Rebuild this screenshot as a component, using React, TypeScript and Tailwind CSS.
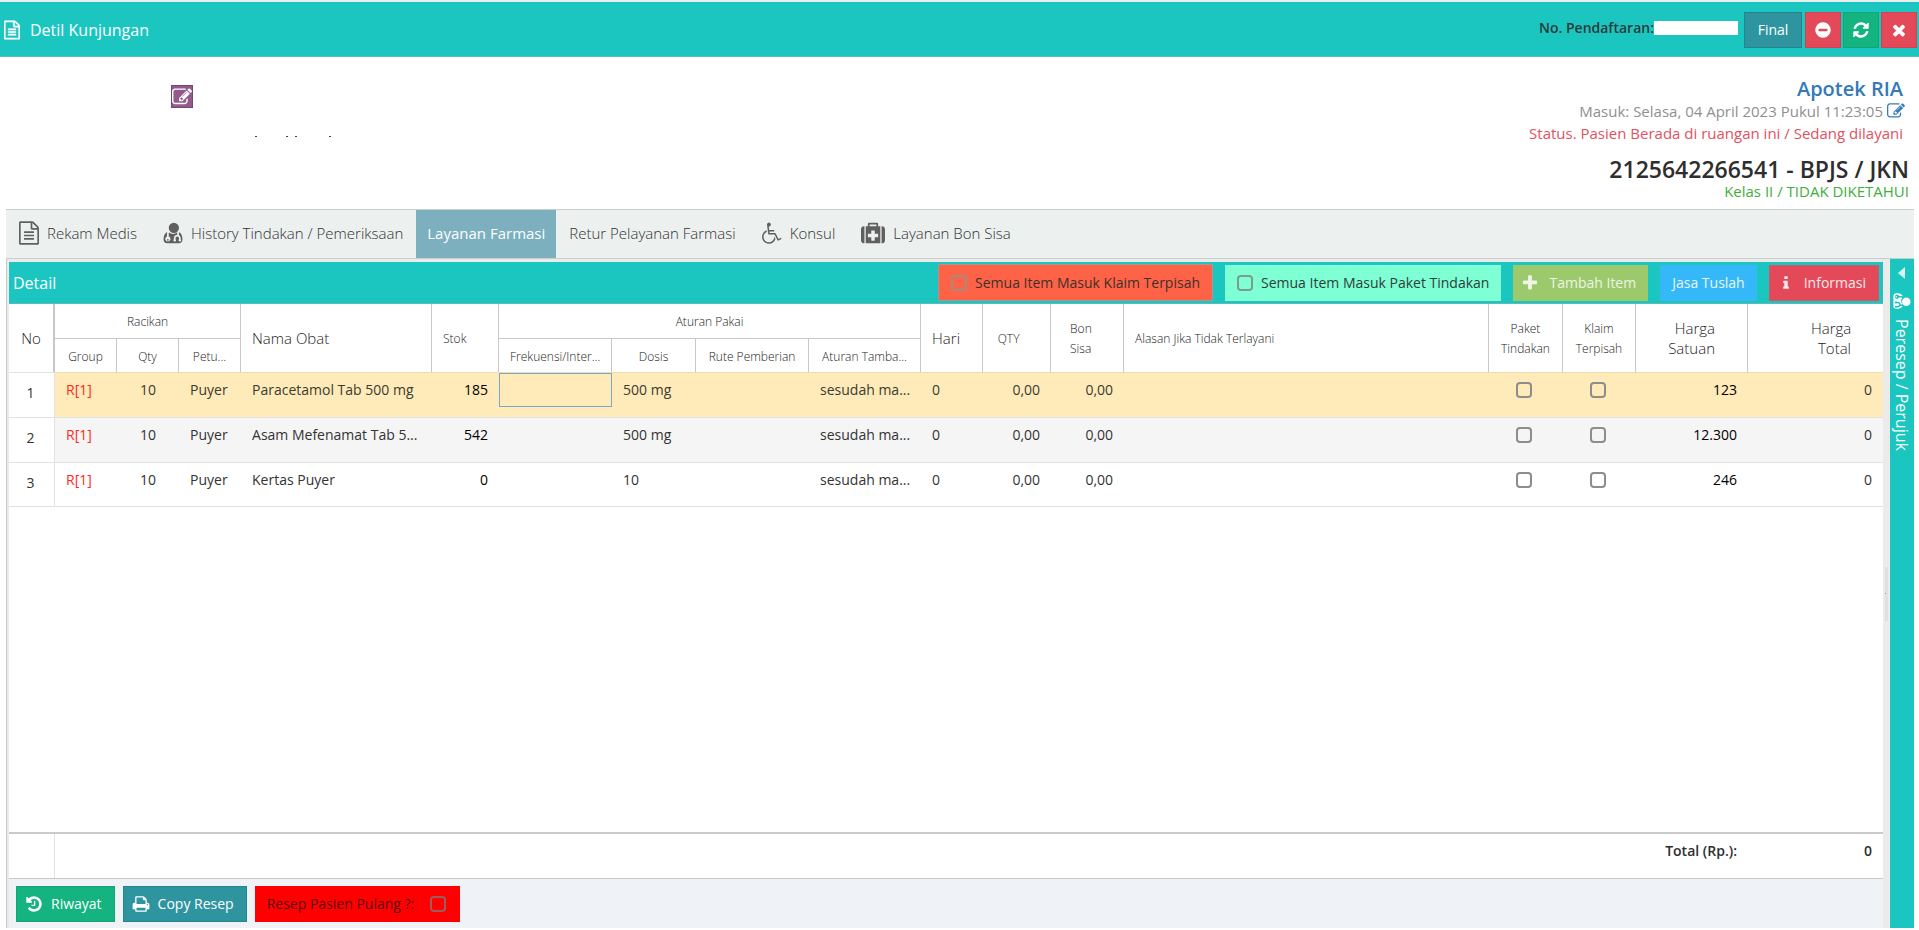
import type { ReactNode } from "react";

const ICONS = {
  file: {
    box: "0 0 1536 1792",
    d: "M1468 380q28 28 48 76t20 88v1152q0 40-28 68t-68 28h-1344q-40 0-68-28t-28-68v-1600q0-40 28-68t68-28h896q40 0 88 20t76 48zm-444-244v376h376q-10-29-22-41l-313-313q-12-12-41-22zm384 1528v-1024h-416q-40 0-68-28t-28-68v-416h-768v1536h1280zm-1024-864q0-14 9-23t23-9h704q14 0 23 9t9 23v64q0 14-9 23t-23 9h-704q-14 0-23-9t-9-23v-64zm736 224q14 0 23 9t9 23v64q0 14-9 23t-23 9h-704q-14 0-23-9t-9-23v-64q0-14 9-23t23-9h704zm0 256q14 0 23 9t9 23v64q0 14-9 23t-23 9h-704q-14 0-23-9t-9-23v-64q0-14 9-23t23-9h704z",
  },
  edit: {
    box: "0 0 1792 1792",
    d: "M888 1184l116-116-152-152-116 116v56h96v96h56zm440-720q-16-16-33 1l-350 350q-17 17-1 33t33-1l350-350q17-17 1-33zm80 594v190q0 119-84.5 203.5t-203.5 84.5h-832q-119 0-203.5-84.5t-84.5-203.5v-832q0-119 84.5-203.5t203.5-84.5h832q63 0 117 25 15 7 18 23 3 17-9 29l-49 49q-14 14-32 8-23-6-45-6h-832q-66 0-113 47t-47 113v832q0 66 47 113t113 47h832q66 0 113-47t47-113v-126q0-13 9-22l64-64q15-15 35-7t20 29zm-96-738l288 288-672 672h-288v-288zm444 132l-92 92-288-288 92-92q28-28 68-28t68 28l152 152q28 28 28 68t-28 68z",
  },
  doctor: {
    box: "0 0 1408 1792",
    d: "M384 1408q0 26-19 45t-45 19-45-19-19-45 19-45 45-19 45 19 19 45zM1408 1405q0 120-73 189.5t-194 69.5h-874q-121 0-194-69.5t-73-189.5q0-68 5.5-131t24-138 47.5-132.5 81-103 120-60.5q-22 52-22 120v203q-58 20-93 70t-35 111q0 80 56 136t136 56 136-56 56-136q0-61-35.5-111t-92.5-70v-203q0-62 25-93 132 104 295 104t295-104q25 31 25 93v64q-106 0-181 75t-75 181v89q-32 29-32 71 0 40 28 68t68 28 68-28 28-68q0-42-32-71v-89q0-52 38-90t90-38 90 38 38 90v89q-32 29-32 71 0 40 28 68t68 28 68-28 28-68q0-42-32-71v-89q0-68-34.5-127.5t-93.5-93.5q0-10 .5-42.5t0-48-2.5-41.5-7-47-13-40q68 15 120 60.5t81 103 47.5 132.5 24 138 5.5 131zM1152 512q0 159-112.5 271.5t-271.5 112.5-271.5-112.5-112.5-271.5 112.5-271.5 271.5-112.5 271.5 112.5 112.5 271.5z",
  },
  wheelchair: {
    box: "0 0 1664 1792",
    d: "M1023 1187l102 204q-58 179-210 290t-339 111q-156 0-288.5-77.5t-210-210-77.5-288.5q0-181 104.5-330t274.5-211l17 131q-122 54-195 165.5t-73 244.5q0 185 131.5 316.5t316.5 131.5q126 0 232.5-65t165-175.5 49.5-236.5zM1571 1287l58 114-256 128q-13 7-29 7-40 0-57-35l-239-477h-472q-24 0-42.5-16.5t-21.5-40.5l-96-779q-2-16 6-42 14-51 57-82.5t97-31.5q66 0 113 47t47 113q0 69-52 117.5t-120 41.5l37 289h423v128h-407l16 128h455q40 0 57 35l228 455z",
  },
  medkit: {
    box: "0 0 1792 1792",
    d: "M1280 1184v-192q0-14-9-23t-23-9h-224v-224q0-14-9-23t-23-9h-192q-14 0-23 9t-9 23v224h-224q-14 0-23 9t-9 23v192q0 14 9 23t23 9h224v224q0 14 9 23t23 9h192q14 0 23-9t9-23v-224h224q14 0 23-9t9-23zm-640-800h512v-128h-512v128zm-384 0v1280h-32q-92 0-158-66t-66-158v-832q0-92 66-158t158-66h32zm1184 0v1280h-1088v-1280h160v-160q0-40 28-68t68-28h576q40 0 68 28t28 68v160h160zm352 224v832q0 92-66 158t-158 66h-32v-1280h32q92 0 158 66t66 158z",
  },
  times: {
    box: "0 0 1792 1792",
    d: "M1490 1322q0 40-28 68l-136 136q-28 28-68 28t-68-28l-294-294-294 294q-28 28-68 28t-68-28l-136-136q-28-28-28-68t28-68l294-294-294-294q-28-28-28-68t28-68l136-136q28-28 68-28t68 28l294 294 294-294q28-28 68-28t68 28l136 136q28 28 28 68t-28 68l-294 294 294 294q28 28 28 68z",
  },
  minus: {
    box: "0 0 1792 1792",
    d: "M1344 960v-128q0-26-19-45t-45-19h-768q-26 0-45 19t-19 45v128q0 26 19 45t45 19h768q26 0 45-19t19-45zm320-64q0 209-103 385.5t-279.5 279.5-385.5 103-385.5-103-279.5-279.5-103-385.5 103-385.5 279.5-279.5 385.5-103 385.5 103 279.5 279.5 103 385.5z",
  },
  refresh: {
    box: "0 0 1792 1792",
    d: "M1639 1056q0 5-1 7-64 268-268 434.5t-478 166.5q-146 0-282.5-55t-243.5-157l-129 129q-19 19-45 19t-45-19-19-45v-448q0-26 19-45t45-19h448q26 0 45 19t19 45-19 45l-137 137q71 66 161 102t187 36q134 0 250-65t186-179q11-17 53-117 8-23 30-23h192q13 0 22.5 9.5t9.5 22.5zm25-800v448q0 26-19 45t-45 19h-448q-26 0-45-19t-19-45 19-45l138-138q-148-137-349-137-134 0-250 65t-186 179q-11 17-53 117-8 23-30 23h-199q-13 0-22.5-9.5t-9.5-22.5v-7q65-268 270-434.5t480-166.5q146 0 284 55.5t245 156.5l130-129q19-19 45-19t45 19 19 45z",
  },
  plus: {
    box: "0 0 1792 1792",
    d: "M1600 736v192q0 40-28 68t-68 28h-416v416q0 40-28 68t-68 28h-192q-40 0-68-28t-28-68v-416h-416q-40 0-68-28t-28-68v-192q0-40 28-68t68-28h416v-416q0-40 28-68t68-28h192q40 0 68 28t28 68v416h416q40 0 68 28t28 68z",
  },
  info: {
    box: "0 0 1792 1792",
    d: "M1216 1344v128q0 26-19 45t-45 19h-512q-26 0-45-19t-19-45v-128q0-26 19-45t45-19h64v-384h-64q-26 0-45-19t-19-45v-128q0-26 19-45t45-19h384q26 0 45 19t19 45v576h64q26 0 45 19t19 45zm-128-1152v192q0 26-19 45t-45 19h-256q-26 0-45-19t-19-45v-192q0-26 19-45t45-19h256q26 0 45 19t19 45z",
  },
  history: {
    box: "0 0 1792 1792",
    d: "M1664 896q0 156-61 298t-164 245-245 164-298 61q-172 0-327-72.5t-264-204.5q-7-10-6.5-22.5t8.5-20.5l137-138q10-9 25-9 16 2 23 12 73 95 179 147t225 52q104 0 198.5-40.5t163.5-109.5 109.5-163.5 40.5-198.5-40.5-198.5-109.5-163.5-163.5-109.5-198.5-40.5q-98 0-188 35.5t-160 101.5l137 138q31 30 14 69-17 40-59 40h-448q-26 0-45-19t-19-45v-448q0-42 40-59 39-17 69 14l130 129q107-101 244.5-156.5t284.5-55.5q156 0 298 61t245 164 164 245 61 298zm-640-288v448q0 14-9 23t-23 9h-320q-14 0-23-9t-9-23v-64q0-14 9-23t23-9h224v-352q0-14 9-23t23-9h64q14 0 23 9t9 23z",
  },
  print: {
    box: "0 0 1792 1792",
    d: "M448 1536h896v-256h-896v256zm0-640h896v-384h-160q-40 0-68-28t-28-68v-160h-640v640zm1152 64q0-26-19-45t-45-19-45 19-19 45 19 45 45 19 45-19 19-45zm128 0v416q0 13-9.5 22.5t-22.5 9.5h-224v160q0 40-28 68t-68 28h-960q-40 0-68-28t-28-68v-160h-224q-13 0-22.5-9.5t-9.5-22.5v-416q0-79 56.5-135.5t135.5-56.5h64v-544q0-40 28-68t68-28h672q40 0 88 20t76 48l152 152q28 28 48 76t20 88v256h64q79 0 135.5 56.5t56.5 135.5z",
  },
  caret: { box: "0 0 8 12", d: "M7 0v12L0 6z" },
};

function Icon({ name, className }: { name: keyof typeof ICONS; className: string }) {
  return (
    <svg viewBox={ICONS[name].box} fill="currentColor" aria-hidden="true" className={`shrink-0 ${className}`}>
      <path d={ICONS[name].d} />
    </svg>
  );
}

const CHECK = "block shrink-0 appearance-none rounded-[4px] border-2 size-4";

function TopBar() {
  return (
    <header className="flex h-[57px] items-center border-t-2 border-b border-t-[#e8eded] border-b-[#5fb9b6] bg-[#1bc6c1] pl-1 pr-0.5 pt-0.5">
      <Icon name="file" className="mr-2.5 h-5 w-4 stroke-white stroke-[50px] text-white" />
      <h1 className="text-base text-white">Detil Kunjungan</h1>
      <div className="ml-auto flex items-center">
        <label htmlFor="reg" className="pb-1 text-sm font-semibold text-[#2d3a3a]">
          No. Pendaftaran:
        </label>
        <input id="reg" readOnly className="mr-1.5 mb-1 h-3.5 w-[84px] bg-white outline-none" />
        <button className="h-9 w-[58px] border border-[#24858f] bg-[#2e95a0] text-sm text-white">Final</button>
        <button aria-label="Batal" className="ml-[3px] flex h-9 w-9 items-center justify-center border border-[#d63f50] bg-[#e44959] text-white">
          <Icon name="minus" className="size-[18px]" />
        </button>
        <button aria-label="Muat ulang" className="ml-0.5 flex h-9 w-9 items-center justify-center border border-[#0fa774] bg-[#15b37f] text-white">
          <Icon name="refresh" className="size-[18px]" />
        </button>
        <button aria-label="Tutup" className="ml-0.5 flex h-9 w-9 items-center justify-center border border-[#d63f50] bg-[#e44959] text-white">
          <Icon name="times" className="size-[18px]" />
        </button>
      </div>
    </header>
  );
}

function VisitInfo() {
  return (
    <section className="flex h-[152px] items-start justify-between pl-[171px] pr-2.5">
      <div className="flex items-start pt-7">
        <button aria-label="Ubah pasien" className="flex h-[23px] w-[22px] items-center justify-center border border-[#74496f] bg-[#935a8c] text-white">
          <Icon name="edit" className="size-5" />
        </button>
        <svg viewBox="0 0 78 2" className="ml-[62px] mt-[51px] h-0.5 w-[78px]" aria-hidden="true">
          <path d="M0 0h2v1H0zM31 0h2v1h-2zM40 0h2v1h-2zM74 0h2v1h-2z" fill="#444" />
        </svg>
      </div>
      <div className="flex flex-col items-end pt-5">
        <p className="pr-1.5 text-xl leading-6 font-semibold text-[#337ab7]">Apotek RIA</p>
        <p className="flex items-center gap-1 pr-1 text-[15px] leading-5 text-[#8f8f8f]">
          Masuk: Selasa, 04 April 2023 Pukul 11:23:05
          <a href="#edit" aria-label="Ubah tanggal masuk" className="text-[#337ab7]">
            <Icon name="edit" className="size-[18px]" />
          </a>
        </p>
        <p className="pr-1.5 text-[15px] leading-6 text-[#e2515f]">Status. Pasien Berada di ruangan ini / Sedang dilayani</p>
        <p className="mt-3 text-[23px] leading-6 font-semibold text-[#2e2e2e]">2125642266541 - BPJS / JKN</p>
        <p className="text-[15px] leading-5 text-[#3fae3c]">Kelas II / TIDAK DIKETAHUI</p>
      </div>
    </section>
  );
}

const TABS: { label: string; icon?: ReactNode }[] = [
  { label: "Rekam Medis", icon: <Icon name="file" className="h-6 w-5" /> },
  { label: "History Tindakan / Pemeriksaan", icon: <Icon name="doctor" className="h-6 w-5" /> },
  { label: "Layanan Farmasi" },
  { label: "Retur Pelayanan Farmasi" },
  { label: "Konsul", icon: <Icon name="wheelchair" className="h-6 w-5" /> },
  { label: "Layanan Bon Sisa", icon: <Icon name="medkit" className="size-6" /> },
];

function Tabs() {
  return (
    <nav className="flex h-[50px] border-y border-[#c8cdcd] bg-[#ecf0ef]">
      {TABS.map((t) => (
        <button
          key={t.label}
          className={`flex items-center gap-2 pb-0.5 text-[15px] ${
            t.label === "Layanan Farmasi" ? "bg-[#7cb0bf] px-[11px] text-white" : "px-[13px] font-light text-[#333]"
          }`}
        >
          {t.icon && <span className="text-[#606060]">{t.icon}</span>}
          {t.label}
        </button>
      ))}
    </nav>
  );
}

function DetailBar() {
  return (
    <div className="flex h-[42px] items-center gap-3 border-b border-[#5fb9b6] bg-[#1bc6c1] px-1 text-sm">
      <h2 className="mr-auto text-base text-white">Detail</h2>
      <label className="flex h-[37px] items-center gap-2 border border-[#a09a90] bg-[#ff6347] px-3 text-[#40302c]">
        <input type="checkbox" className={`${CHECK} border-[#a58a80]`} />
        Semua Item Masuk Klaim Terpisah
      </label>
      <label className="flex h-9 items-center gap-2 bg-[#7fffd4] px-3 text-[#2c403a]">
        <input type="checkbox" className={`${CHECK} border-[#7c9c90]`} />
        Semua Item Masuk Paket Tindakan
      </label>
      <button className="flex h-9 items-center gap-2.5 bg-[#9cc96b] pl-2 pr-3 text-[#eef4e6]">
        <Icon name="plus" className="size-[18px]" />
        Tambah Item
      </button>
      <button className="h-9 bg-[#35b8f8] px-3 text-[#e9f5fc]">Jasa Tuslah</button>
      <button className="flex h-9 items-center gap-2.5 border border-[#c95a66] bg-[#e44959] pl-2 pr-3 text-[#fbeaea]">
        <Icon name="info" className="size-4" />
        Informasi
      </button>
    </div>
  );
}

const ROWS = [
  { nama: "Paracetamol Tab 500 mg", stok: "185", dosis: "500 mg", harga: "123" },
  { nama: "Asam Mefenamat Tab 5...", stok: "542", dosis: "500 mg", harga: "12.300" },
  { nama: "Kertas Puyer", stok: "0", dosis: "10", harga: "246" },
];
const ROW_STYLE = [
  "bg-[#feebb9] border-[#ecdcae] text-[#3d3a30]",
  "bg-[#f5f5f5] border-[#e2e2e2] text-[#333]",
  "bg-white border-b border-[#e2e2e2] text-[#333]",
];

const TH = "border-r border-[#c8c8c8] px-[11px] font-light text-[#222]";
const SM = "pt-0.5 text-xs";
const LG = "text-[15px] leading-5";
const TD = "whitespace-nowrap px-[11px] pt-[7px] align-top leading-5";

function MedicineTable() {
  return (
    <table className="w-full table-fixed border-separate border-spacing-0 text-sm">
      <colgroup>
        <col className="w-[46px]" />
        <col className="w-[62px]" />
        <col className="w-[62px]" />
        <col className="w-[62px]" />
        <col className="w-[191px]" />
        <col className="w-[67px]" />
        <col className="w-[113px]" />
        <col className="w-[84px]" />
        <col className="w-[113px]" />
        <col className="w-[112px]" />
        <col className="w-[62px]" />
        <col className="w-[68px]" />
        <col className="w-[73px]" />
        <col />
        <col className="w-[74px]" />
        <col className="w-[73px]" />
        <col className="w-[112px]" />
        <col className="w-[135px]" />
      </colgroup>
      <thead>
        <tr className="h-[35px]">
          <th rowSpan={2} className={`${TH} ${LG} border-r-2`}>No</th>
          <th colSpan={3} className={`${TH} ${SM} border-b`}>Racikan</th>
          <th rowSpan={2} className={`${TH} ${LG} text-left`}>Nama Obat</th>
          <th rowSpan={2} className={`${TH} ${SM} text-left`}>Stok</th>
          <th colSpan={4} className={`${TH} ${SM} border-b`}>Aturan Pakai</th>
          <th rowSpan={2} className={`${TH} ${LG} text-left`}>Hari</th>
          <th rowSpan={2} className={`${TH} ${SM}`}>
            <span className="mr-4">QTY</span>
          </th>
          <th rowSpan={2} className={`${TH} ${SM} leading-5`}>
            <span className="ml-2 block w-6 text-left">Bon Sisa</span>
          </th>
          <th rowSpan={2} className={`${TH} ${SM} text-left`}>Alasan Jika Tidak Terlayani</th>
          <th rowSpan={2} className={`${TH} ${SM} leading-5`}>Paket Tindakan</th>
          <th rowSpan={2} className={`${TH} ${SM} leading-5`}>Klaim Terpisah</th>
          <th rowSpan={2} className={`${TH} ${LG} pr-8 text-right`}>Harga Satuan</th>
          <th rowSpan={2} className="px-8 text-right text-[15px] leading-5 font-light text-[#222]">
            <span className="ml-auto block w-10">Harga Total</span>
          </th>
        </tr>
        <tr className="h-[33px]">
          {["Group", "Qty", "Petu...", "Frekuensi/Inter...", "Dosis", "Rute Pemberian", "Aturan Tamba..."].map((h) => (
            <th key={h} className={`${TH} ${SM} whitespace-nowrap`}>{h}</th>
          ))}
        </tr>
      </thead>
      <tbody>
        {ROWS.map((r, i) => {
          const c = `${TD} border-t ${ROW_STYLE[i]}`;
          return (
            <tr key={r.nama} className="h-[45px]">
              <td className={`border-t border-r border-[#e2e2e2] pb-1 pr-0.5 text-center text-[#333] ${i === 2 ? "border-b" : ""}`}>{i + 1}</td>
              <td className={c}>
                <span className="text-[#ff2a20]">R[1]</span>
              </td>
              <td className={`${c} text-center`}>10</td>
              <td className={c}>Puyer</td>
              <td className={c}>{r.nama}</td>
              <td className={`${c} text-right`}>
                <span className="font-medium text-black">{r.stok}</span>
              </td>
              <td className={`border-t align-top ${ROW_STYLE[i]}`}>
                {i === 0 && <div className="h-[34px] border border-[#7aa9c8]" />}
              </td>
              <td className={c}>{r.dosis}</td>
              <td className={c} />
              <td className={c}>sesudah ma...</td>
              <td className={c}>0</td>
              <td className={`${c} text-right`}>0,00</td>
              <td className={`${c} text-right`}>0,00</td>
              <td className={c} />
              <td className={c}>
                <input type="checkbox" aria-label={`Paket tindakan ${r.nama}`} className={`${CHECK} ml-4 mt-0.5 border-[#8d8d8d]`} />
              </td>
              <td className={c}>
                <input type="checkbox" aria-label={`Klaim terpisah ${r.nama}`} className={`${CHECK} ml-4 mt-0.5 border-[#8d8d8d]`} />
              </td>
              <td className={`${c} text-right`}>
                <span className="font-medium text-black">{r.harga}</span>
              </td>
              <td className={`${c} text-right`}>0</td>
            </tr>
          );
        })}
      </tbody>
    </table>
  );
}

function TotalRow() {
  return (
    <div className="flex h-[47px] shrink-0 border-t-2 border-b border-t-[#cacaca] border-b-[#c8c8c8] text-sm font-semibold text-[#2e2e2e]">
      <div className="w-[46px] border-r border-[#e2e2e2]" />
      <span className="ml-auto pt-[7px] pr-[11px] leading-5">Total (Rp.):</span>
      <span className="w-[135px] pt-[7px] pr-[11px] text-right leading-5">0</span>
    </div>
  );
}

function Footer() {
  return (
    <footer className="flex h-[49px] shrink-0 items-center gap-2 bg-[#eff3f8] px-[7px] text-sm">
      <button className="flex h-9 items-center gap-2 border border-[#0fa774] bg-[#15b37f] pl-2 pr-3 text-white">
        <Icon name="history" className="size-[18px]" />
        Riwayat
      </button>
      <button className="flex h-9 items-center gap-2 border border-[#24858f] bg-[#2e95a0] pl-2 pr-3 text-white">
        <Icon name="print" className="size-[18px]" />
        Copy Resep
      </button>
      <label className="flex h-9 items-center gap-4 bg-[#ff0000] pl-3 pr-3.5 text-[#5a1010]">
        Resep Pasien Pulang ?:
        <input type="checkbox" className={`${CHECK} border-[#a05c5c]`} />
      </label>
    </footer>
  );
}

function SidePanel() {
  return (
    <aside className="flex w-6 shrink-0 flex-col items-center bg-[#1bc6c1] pt-2 text-white">
      <Icon name="caret" className="h-3 w-2 text-[#d5f5f3]" />
      <Icon name="doctor" className="mt-3 h-5 w-4 rotate-90" />
      <span className="mt-2 text-base leading-6 [writing-mode:vertical-rl]">Peresep / Perujuk</span>
    </aside>
  );
}

export default function App() {
  return (
    <div className="flex min-h-screen flex-col bg-white pb-0.5 font-['Open_Sans',sans-serif]">
      <TopBar />
      <VisitInfo />
      <div className="ml-1.5 mr-[5px] flex grow flex-col">
        <Tabs />
        <div className="flex grow border-l border-[#c8c8c8] bg-[#ebebeb]">
          <main className="flex grow flex-col pl-0.5 pt-[3px]">
            <DetailBar />
            <div className="grow bg-white">
              <MedicineTable />
            </div>
            <div className="bg-white">
              <TotalRow />
            </div>
            <Footer />
          </main>
          <div className="flex w-[7px] shrink-0 items-center justify-center">
            <div className="flex h-[54px] w-[3px] items-center bg-[#e0e0e0]">
              <div className="size-px bg-[#999]" />
            </div>
          </div>
          <SidePanel />
        </div>
      </div>
    </div>
  );
}
